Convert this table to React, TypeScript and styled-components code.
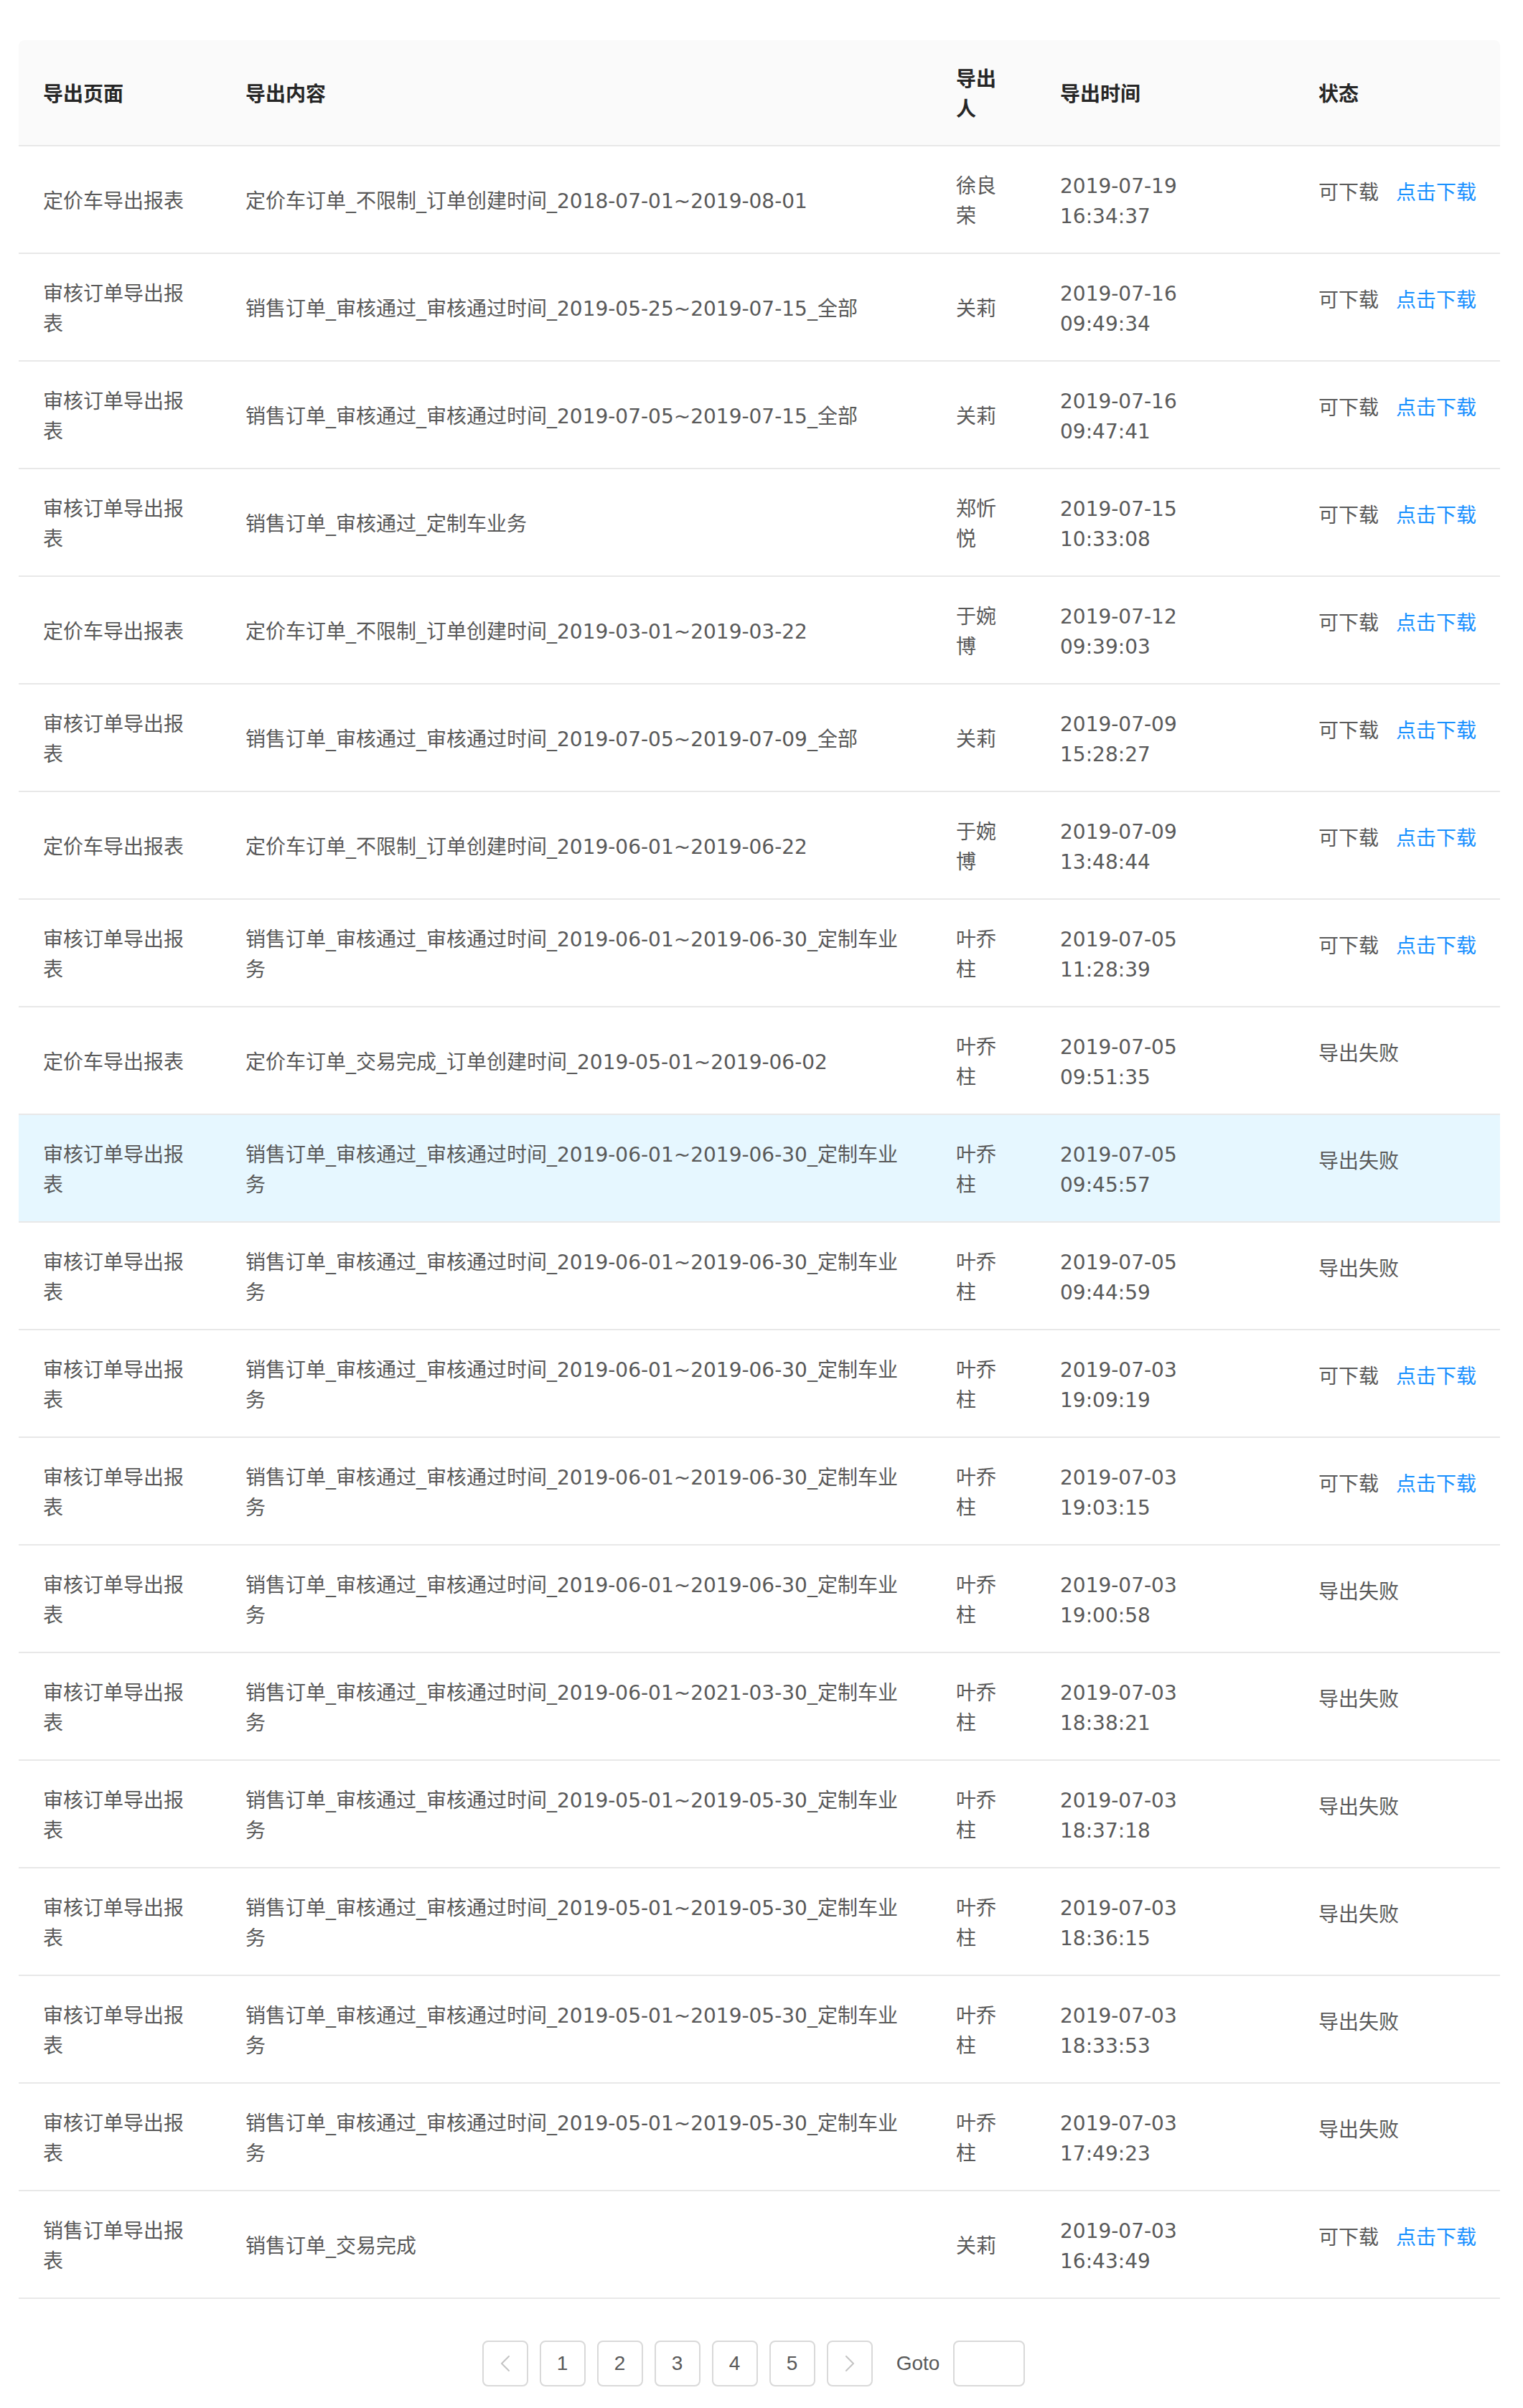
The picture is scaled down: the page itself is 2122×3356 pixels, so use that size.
import React from "react";
import styled, { createGlobalStyle } from "styled-components";

const GlobalStyle = createGlobalStyle`
  html, body {
    margin: 0;
    padding: 0;
    background: #ffffff;
  }
  body {
    font-family: "DejaVu Sans", "Noto Sans CJK SC", sans-serif;
    font-size: 28px;
    color: #595959;
  }
`;

type Row = {
  page: string;
  content: string;
  user: string;
  time: string;
  ok: boolean;
  active?: boolean;
};

const rows: Row[] = [
  { page: "定价车导出报表", content: "定价车订单_不限制_订单创建时间_2018-07-01~2019-08-01", user: "徐良荣", time: "2019-07-19 16:34:37", ok: true },
  { page: "审核订单导出报表", content: "销售订单_审核通过_审核通过时间_2019-05-25~2019-07-15_全部", user: "关莉", time: "2019-07-16 09:49:34", ok: true },
  { page: "审核订单导出报表", content: "销售订单_审核通过_审核通过时间_2019-07-05~2019-07-15_全部", user: "关莉", time: "2019-07-16 09:47:41", ok: true },
  { page: "审核订单导出报表", content: "销售订单_审核通过_定制车业务", user: "郑忻悦", time: "2019-07-15 10:33:08", ok: true },
  { page: "定价车导出报表", content: "定价车订单_不限制_订单创建时间_2019-03-01~2019-03-22", user: "于婉博", time: "2019-07-12 09:39:03", ok: true },
  { page: "审核订单导出报表", content: "销售订单_审核通过_审核通过时间_2019-07-05~2019-07-09_全部", user: "关莉", time: "2019-07-09 15:28:27", ok: true },
  { page: "定价车导出报表", content: "定价车订单_不限制_订单创建时间_2019-06-01~2019-06-22", user: "于婉博", time: "2019-07-09 13:48:44", ok: true },
  { page: "审核订单导出报表", content: "销售订单_审核通过_审核通过时间_2019-06-01~2019-06-30_定制车业务", user: "叶乔柱", time: "2019-07-05 11:28:39", ok: true },
  { page: "定价车导出报表", content: "定价车订单_交易完成_订单创建时间_2019-05-01~2019-06-02", user: "叶乔柱", time: "2019-07-05 09:51:35", ok: false },
  { page: "审核订单导出报表", content: "销售订单_审核通过_审核通过时间_2019-06-01~2019-06-30_定制车业务", user: "叶乔柱", time: "2019-07-05 09:45:57", ok: false, active: true },
  { page: "审核订单导出报表", content: "销售订单_审核通过_审核通过时间_2019-06-01~2019-06-30_定制车业务", user: "叶乔柱", time: "2019-07-05 09:44:59", ok: false },
  { page: "审核订单导出报表", content: "销售订单_审核通过_审核通过时间_2019-06-01~2019-06-30_定制车业务", user: "叶乔柱", time: "2019-07-03 19:09:19", ok: true },
  { page: "审核订单导出报表", content: "销售订单_审核通过_审核通过时间_2019-06-01~2019-06-30_定制车业务", user: "叶乔柱", time: "2019-07-03 19:03:15", ok: true },
  { page: "审核订单导出报表", content: "销售订单_审核通过_审核通过时间_2019-06-01~2019-06-30_定制车业务", user: "叶乔柱", time: "2019-07-03 19:00:58", ok: false },
  { page: "审核订单导出报表", content: "销售订单_审核通过_审核通过时间_2019-06-01~2021-03-30_定制车业务", user: "叶乔柱", time: "2019-07-03 18:38:21", ok: false },
  { page: "审核订单导出报表", content: "销售订单_审核通过_审核通过时间_2019-05-01~2019-05-30_定制车业务", user: "叶乔柱", time: "2019-07-03 18:37:18", ok: false },
  { page: "审核订单导出报表", content: "销售订单_审核通过_审核通过时间_2019-05-01~2019-05-30_定制车业务", user: "叶乔柱", time: "2019-07-03 18:36:15", ok: false },
  { page: "审核订单导出报表", content: "销售订单_审核通过_审核通过时间_2019-05-01~2019-05-30_定制车业务", user: "叶乔柱", time: "2019-07-03 18:33:53", ok: false },
  { page: "审核订单导出报表", content: "销售订单_审核通过_审核通过时间_2019-05-01~2019-05-30_定制车业务", user: "叶乔柱", time: "2019-07-03 17:49:23", ok: false },
  { page: "销售订单导出报表", content: "销售订单_交易完成", user: "关莉", time: "2019-07-03 16:43:49", ok: true },
];

const Page = styled.div`
  padding: 56px 32px 30px 26px;
  width: 2064px;
`;

const Table = styled.table`
  width: 2064px;
  table-layout: fixed;
  border-collapse: separate;
  border-spacing: 0;
  font-size: 28px;
  line-height: 42px;
`;

const HeadCell = styled.th<{ $first?: boolean; $last?: boolean }>`
  background: #fafafa;
  color: #262626;
  font-family: "Noto Sans CJK SC", sans-serif;
  font-weight: 700;
  text-align: left;
  vertical-align: middle;
  padding: 31px 32px 31px ${(p) => (p.$first ? "34px" : "32px")};
  border-bottom: 2px solid #e8e8e8;
  border-top-left-radius: ${(p) => (p.$first ? "8px" : "0")};
  border-top-right-radius: ${(p) => (p.$last ? "8px" : "0")};
`;

const BodyRow = styled.tr<{ $active?: boolean }>`
  background: ${(p) => (p.$active ? "#e6f7ff" : "#ffffff")};
`;

const Cell = styled.td<{ $first?: boolean }>`
  color: #595959;
  vertical-align: middle;
  padding: 35px 32px 29px ${(p) => (p.$first ? "34px" : "32px")};
  border-bottom: 2px solid #e8e8e8;
  word-break: normal;
  overflow-wrap: break-word;
`;

const TimeText = styled.span`
  display: block;
  max-width: 240px;
`;

const StatusBox = styled.div`
  display: flex;
  align-items: center;
  gap: 24px;
  padding-bottom: 24px;
  white-space: nowrap;
`;

const Link = styled.a`
  color: #1890ff;
  text-decoration: none;
  cursor: pointer;
`;

const Pager = styled.nav`
  display: flex;
  justify-content: center;
  align-items: center;
  margin-top: 58px;
  width: 2064px;
`;

const PagerList = styled.ul`
  display: flex;
  align-items: center;
  gap: 16px;
  margin: 0;
  padding: 0;
  list-style: none;
`;

const PageItem = styled.li<{ $disabled?: boolean }>`
  box-sizing: border-box;
  width: 64px;
  height: 64px;
  border: 2px solid #d9d9d9;
  border-radius: 8px;
  display: flex;
  align-items: center;
  justify-content: center;
  font-family: "Liberation Sans", "Noto Sans CJK SC", sans-serif;
  font-size: 28px;
  color: #595959;
  background: #ffffff;
  cursor: ${(p) => (p.$disabled ? "not-allowed" : "pointer")};
`;

const Jumper = styled.div`
  display: flex;
  align-items: center;
  margin-left: 33px;
  font-family: "Liberation Sans", "Noto Sans CJK SC", sans-serif;
  font-size: 28px;
  color: #595959;
`;

const JumpInput = styled.input`
  box-sizing: border-box;
  width: 100px;
  height: 64px;
  margin: 0 16px 0 19px;
  border: 2px solid #d9d9d9;
  border-radius: 8px;
  outline: none;
  font-size: 28px;
  padding: 0 12px;
  background: #ffffff;
`;

const Chevron = ({ dir }: { dir: "left" | "right" }) => (
  <svg width="14" height="22" viewBox="0 0 14 22" fill="none">
    <path
      d={dir === "left" ? "M12 1 L2 11 L12 21" : "M2 1 L12 11 L2 21"}
      stroke="#c4c4c4"
      strokeWidth="2"
      strokeLinecap="round"
      strokeLinejoin="round"
    />
  </svg>
);

export default function App() {
  return (
    <>
      <GlobalStyle />
      <Page>
        <Table>
          <colgroup>
            <col style={{ width: 284 }} />
            <col style={{ width: 990 }} />
            <col style={{ width: 145 }} />
            <col style={{ width: 360 }} />
            <col style={{ width: 285 }} />
          </colgroup>
          <thead>
            <tr>
              <HeadCell $first>导出页面</HeadCell>
              <HeadCell>导出内容</HeadCell>
              <HeadCell>导出人</HeadCell>
              <HeadCell>导出时间</HeadCell>
              <HeadCell $last>状态</HeadCell>
            </tr>
          </thead>
          <tbody>
            {rows.map((r, i) => (
              <BodyRow key={i} $active={r.active}>
                <Cell $first>{r.page}</Cell>
                <Cell>{r.content}</Cell>
                <Cell>{r.user}</Cell>
                <Cell>
                  <TimeText>{r.time}</TimeText>
                </Cell>
                <Cell>
                  <StatusBox>
                    {r.ok ? (
                      <>
                        <span>可下载</span>
                        <Link>点击下载</Link>
                      </>
                    ) : (
                      <span>导出失败</span>
                    )}
                  </StatusBox>
                </Cell>
              </BodyRow>
            ))}
          </tbody>
        </Table>
        <Pager>
          <PagerList>
            <PageItem $disabled>
              <Chevron dir="left" />
            </PageItem>
            {[1, 2, 3, 4, 5].map((n) => (
              <PageItem key={n}>{n}</PageItem>
            ))}
            <PageItem $disabled>
              <Chevron dir="right" />
            </PageItem>
          </PagerList>
          <Jumper>
            Goto
            <JumpInput type="text" />
          </Jumper>
        </Pager>
      </Page>
    </>
  );
}
